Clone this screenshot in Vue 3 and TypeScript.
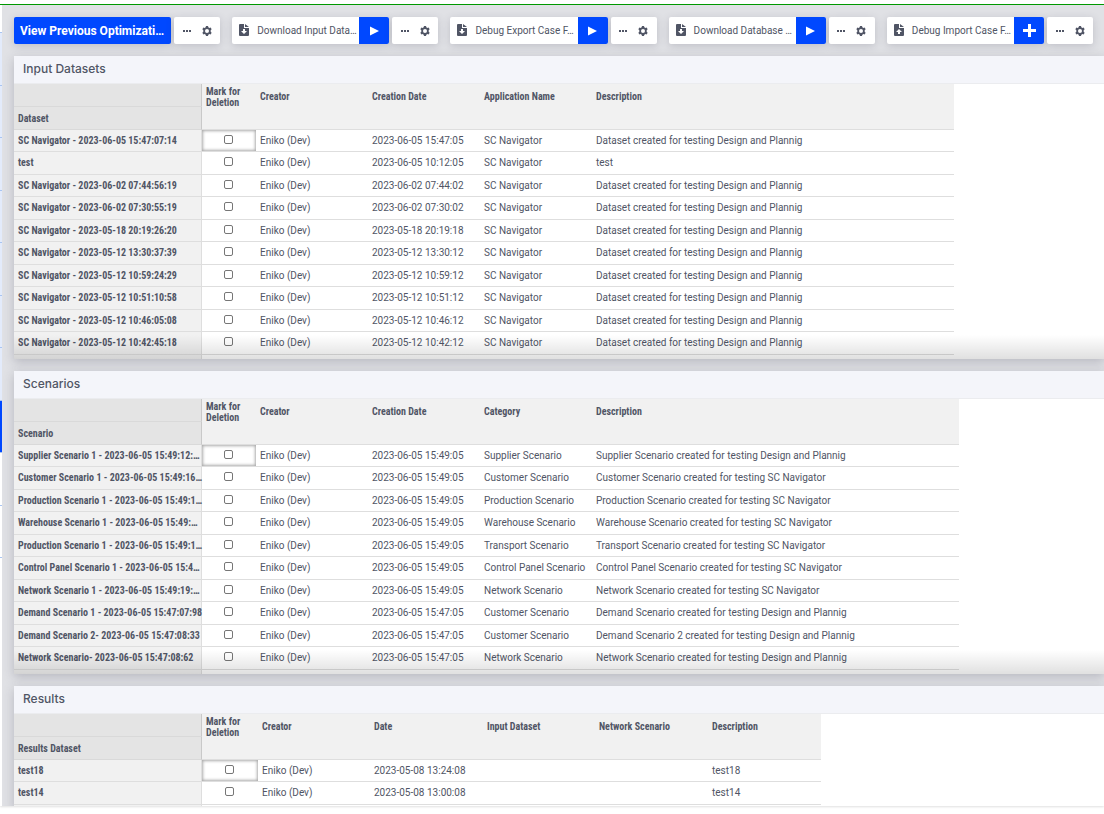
<script setup lang="ts">
interface Row {
  name: string
  cells: string[]
}

interface Grid {
  title: string
  rowLabel: string
  headers: string[]
  widths: number[]
  rows: Row[]
  clipped: boolean
}

interface Action {
  label: string
  icon: 'download' | 'upload'
}

const actions: Action[] = [
  { label: 'Download Input Data…', icon: 'download' },
  { label: 'Debug Export Case F…', icon: 'download' },
  { label: 'Download Database …', icon: 'download' },
  { label: 'Debug Import Case F…', icon: 'upload' },
]

const planning = 'Dataset created for testing Design and Plannig'

function dataset(name: string, created: string, description: string = planning): Row {
  return { name, cells: ['Eniko (Dev)', created, 'SC Navigator', description] }
}

function scenario(name: string, created: string, category: string, description: string): Row {
  return { name, cells: ['Eniko (Dev)', '2023-06-05 ' + created, category, description] }
}

const grids: Grid[] = [
  {
    title: 'Input Datasets',
    rowLabel: 'Dataset',
    headers: ['Creator', 'Creation Date', 'Application Name', 'Description'],
    widths: [188, 54, 112, 112, 112, 362],
    clipped: true,
    rows: [
      dataset('SC Navigator - 2023-06-05 15:47:07:14', '2023-06-05 15:47:05'),
      dataset('test', '2023-06-05 10:12:05', 'test'),
      dataset('SC Navigator - 2023-06-02 07:44:56:19', '2023-06-02 07:44:02'),
      dataset('SC Navigator - 2023-06-02 07:30:55:19', '2023-06-02 07:30:02'),
      dataset('SC Navigator - 2023-05-18 20:19:26:20', '2023-05-18 20:19:18'),
      dataset('SC Navigator - 2023-05-12 13:30:37:39', '2023-05-12 13:30:12'),
      dataset('SC Navigator - 2023-05-12 10:59:24:29', '2023-05-12 10:59:12'),
      dataset('SC Navigator - 2023-05-12 10:51:10:58', '2023-05-12 10:51:12'),
      dataset('SC Navigator - 2023-05-12 10:46:05:08', '2023-05-12 10:46:12'),
      dataset('SC Navigator - 2023-05-12 10:42:45:18', '2023-05-12 10:42:12'),
    ],
  },
  {
    title: 'Scenarios',
    rowLabel: 'Scenario',
    headers: ['Creator', 'Creation Date', 'Category', 'Description'],
    widths: [188, 54, 112, 112, 112, 367],
    clipped: true,
    rows: [
      scenario('Supplier Scenario 1 - 2023-06-05 15:49:12:…', '15:49:05', 'Supplier Scenario', 'Supplier Scenario created for testing Design and Plannig'),
      scenario('Customer Scenario 1 - 2023-06-05 15:49:16…', '15:49:05', 'Customer Scenario', 'Customer Scenario created for testing SC Navigator'),
      scenario('Production Scenario 1 - 2023-06-05 15:49:1…', '15:49:05', 'Production Scenario', 'Production Scenario created for testing SC Navigator'),
      scenario('Warehouse Scenario 1 - 2023-06-05 15:49:…', '15:49:05', 'Warehouse Scenario', 'Warehouse Scenario created for testing SC Navigator'),
      scenario('Production Scenario 1 - 2023-06-05 15:49:1…', '15:49:05', 'Transport Scenario', 'Transport Scenario created for testing SC Navigator'),
      scenario('Control Panel Scenario 1 - 2023-06-05 15:4…', '15:49:05', 'Control Panel Scenario', 'Control Panel Scenario created for testing SC Navigator'),
      scenario('Network Scenario 1 - 2023-06-05 15:49:19:…', '15:49:05', 'Network Scenario', 'Network Scenario created for testing SC Navigator'),
      scenario('Demand Scenario 1 - 2023-06-05 15:47:07:98', '15:47:05', 'Customer Scenario', 'Demand Scenario created for testing Design and Plannig'),
      scenario('Demand Scenario 2- 2023-06-05 15:47:08:33', '15:47:05', 'Customer Scenario', 'Demand Scenario 2 created for testing Design and Plannig'),
      scenario('Network Scenario- 2023-06-05 15:47:08:62', '15:47:05', 'Network Scenario', 'Network Scenario created for testing Design and Plannig'),
    ],
  },
  {
    title: 'Results',
    rowLabel: 'Results Dataset',
    headers: ['Creator', 'Date', 'Input Dataset', 'Network Scenario', 'Description'],
    widths: [188, 56, 112, 113, 112, 113, 113],
    clipped: false,
    rows: [
      { name: 'test18', cells: ['Eniko (Dev)', '2023-05-08 13:24:08', '', '', 'test18'] },
      { name: 'test14', cells: ['Eniko (Dev)', '2023-05-08 13:00:08', '', '', 'test14'] },
    ],
  },
]

const total = (widths: number[]): number => widths.reduce((sum, w) => sum + w, 0)
</script>

<template>
  <div class="app">
    <div class="topline"></div>
    <div class="body">
      <nav class="rail" aria-label="Pages">
        <span v-for="n in 11" :key="n" class="stop" :class="{ first: n === 1, active: n === 9, plain: n > 9 }"></span>
      </nav>
      <main class="page">
        <div class="toolbar">
          <div class="group">
            <button type="button" class="primary">View Previous Optimizati…</button>
            <div class="tools">
              <button type="button" class="tool" aria-label="More">
                <svg width="8" height="2" viewBox="0 0 8 2"><path d="M0 0h2v2H0zM3 0h2v2H3zM6 0h2v2H6z" /></svg>
              </button>
              <button type="button" class="tool" aria-label="Settings">
                <svg width="10" height="10" viewBox="0 0 10 10"><path fill-rule="evenodd" d="M4 0h2l.35 1.35 1 .55 1.3-.4 1 1.75-.95.95v1.6l.95.95-1 1.75-1.3-.4-1 .55L6 10H4l-.35-1.35-1-.55-1.3.4-1-1.75.95-.95V4.2l-.95-.95 1-1.75 1.3.4 1-.55zM5 3a2 2 0 1 0 0 4 2 2 0 0 0 0-4z" /></svg>
              </button>
            </div>
          </div>
          <div v-for="a in actions" :key="a.label" class="group">
            <div class="action">
              <svg class="file" width="10" height="12" viewBox="0 0 10 12">
                <path d="M1 0h4v4h5v7a1 1 0 0 1-1 1H1a1 1 0 0 1-1-1V1a1 1 0 0 1 1-1zM6 0l4 3H6z" />
                <path v-if="a.icon === 'download'" class="mark" d="M4 5h2v2h2L5 10 2 7h2z" />
                <path v-else class="mark" d="M4 10h2V8h2L5 5 2 8h2z" />
              </svg>
              <span class="label">{{ a.label }}</span>
              <button type="button" class="run" :aria-label="a.label">
                <svg v-if="a.icon === 'download'" width="9" height="10" viewBox="0 0 9 10"><path d="M0 .5L9 5 0 9.500z" /></svg>
                <svg v-else width="13" height="13" viewBox="0 0 13 13"><path d="M5 0h3v5h5v3H8v5H5V8H0V5h5z" /></svg>
              </button>
            </div>
            <div class="tools">
              <button type="button" class="tool" aria-label="More">
                <svg width="8" height="2" viewBox="0 0 8 2"><path d="M0 0h2v2H0zM3 0h2v2H3zM6 0h2v2H6z" /></svg>
              </button>
              <button type="button" class="tool" aria-label="Settings">
                <svg width="10" height="10" viewBox="0 0 10 10"><path fill-rule="evenodd" d="M4 0h2l.35 1.35 1 .55 1.3-.4 1 1.75-.95.95v1.6l.95.95-1 1.75-1.3-.4-1 .55L6 10H4l-.35-1.35-1-.55-1.3.4-1-1.75.95-.95V4.2l-.95-.95 1-1.75 1.3.4 1-.55zM5 3a2 2 0 1 0 0 4 2 2 0 0 0 0-4z" /></svg>
              </button>
            </div>
          </div>
        </div>

        <section v-for="g in grids" :key="g.title" class="card" :class="{ clipped: g.clipped }">
          <h2>{{ g.title }}</h2>
          <table :style="{ width: total(g.widths) + 'px' }">
            <colgroup>
              <col v-for="(w, i) in g.widths" :key="i" :style="{ width: w + 'px' }" />
            </colgroup>
            <thead>
              <tr>
                <td class="corner"></td>
                <th scope="col" rowspan="2" class="markhead">Mark for Deletion</th>
                <th v-for="h in g.headers" :key="h" scope="col" rowspan="2">{{ h }}</th>
              </tr>
              <tr>
                <th scope="col" class="corner rowlabel">{{ g.rowLabel }}</th>
              </tr>
            </thead>
            <tbody>
              <tr v-for="(r, i) in g.rows" :key="i">
                <th scope="row">{{ r.name }}</th>
                <td class="check" :class="{ selected: i === 0 }">
                  <input type="checkbox" :aria-label="'Mark for deletion: ' + r.name" />
                </td>
                <td v-for="(c, j) in r.cells" :key="j">{{ c }}</td>
              </tr>
            </tbody>
            <tfoot>
              <tr>
                <td class="stub"></td>
                <td :colspan="g.widths.length - 1"></td>
              </tr>
            </tfoot>
          </table>
        </section>
      </main>
    </div>
  </div>
</template>

<style>
body {
  margin: 0;
  background: #fff;
}
</style>

<style scoped>
.app {
  box-sizing: border-box;
  height: 100vh;
  padding: 4px 0 8px;
  overflow: hidden;
  display: flex;
  flex-direction: column;
  font: 10px/12px Roboto, "Liberation Sans", sans-serif;
  color: #505565;
}
.topline {
  flex: none;
  height: 1px;
  background: #009a00;
}
.body {
  flex: 1;
  min-height: 0;
  display: flex;
  overflow: hidden;
  box-shadow: 0 1px 2px rgba(0, 0, 0, 0.12);
}
.rail {
  width: 2px;
  display: flex;
  flex-direction: column;
  background: #fff;
}
.stop {
  box-sizing: border-box;
  flex: none;
  height: 52px;
  background: #e3ebfb;
  border-bottom: 1px solid #a9c5f2;
}
.stop:nth-child(even) {
  height: 53px;
}
.stop.first {
  height: 28px;
  background: #fff;
}
.stop.active {
  background: #0048ff;
}
.stop.plain {
  background: #fff;
}
.page {
  flex: 1;
  min-width: 0;
  display: flex;
  flex-direction: column;
  gap: 12px;
  padding: 12px 0 0 12px;
  background: #e0e1e5;
  overflow: hidden;
}
.toolbar {
  flex: none;
  display: flex;
  gap: 12px;
  padding-right: 11px;
}
.group {
  flex: 1;
  min-width: 0;
  display: flex;
  gap: 3px;
  height: 27px;
}
button {
  border: 0;
  padding: 0;
  margin: 0;
  font: inherit;
  color: inherit;
  background: none;
  display: flex;
  align-items: center;
  justify-content: center;
}
svg {
  display: block;
  fill: currentColor;
  flex: none;
}
.primary,
.action,
.tools {
  border-radius: 2px;
  box-shadow: 0 2px 8px rgba(60, 60, 80, 0.2);
}
.primary {
  flex: 1;
  justify-content: flex-start;
  padding: 0 6px;
  background: #0048ff;
  color: #fff;
  font-size: 12px;
  font-weight: 700;
  white-space: nowrap;
}
.action {
  flex: 1;
  min-width: 0;
  display: flex;
  align-items: center;
  background: #fff;
}
.file {
  margin: 0 8px 2px 7px;
}
.mark {
  fill: #fff;
}
.label {
  flex: 1;
  white-space: nowrap;
}
.run {
  width: 30px;
  height: 27px;
  background: #0048ff;
  color: #fff;
  border-radius: 0 2px 2px 0;
}
.tools {
  width: 46px;
  display: flex;
  align-items: center;
  justify-content: center;
  gap: 11px;
  background: #fff;
}
.card {
  flex: none;
  position: relative;
  background: #fff;
  box-shadow: 0 3px 10px rgba(60, 60, 80, 0.25);
}
h2 {
  box-sizing: border-box;
  margin: 0;
  height: 28px;
  padding: 0 9px;
  font: 500 12px/26px Inter, "Open Sans", sans-serif;
  background: #f4f5fa;
  border-bottom: 1px solid #ebecef;
}
table {
  table-layout: fixed;
  border-collapse: separate;
  border-spacing: 0;
}
th,
td {
  box-sizing: border-box;
  padding: 0 4px;
  text-align: left;
  white-space: nowrap;
}
th {
  font-family: "Roboto Condensed", Roboto, "Liberation Sans", sans-serif;
  font-size: 10px;
  font-weight: 700;
}
thead th {
  padding-top: 7px;
  line-height: 11px;
  vertical-align: top;
  background: #f1f1f1;
  border-bottom: 1px solid #dedede;
}
thead th.markhead {
  padding-top: 2px;
  white-space: normal;
}
thead .corner {
  height: 23px;
  padding: 0 4px;
  vertical-align: middle;
  background: #e4e4e4;
  border-right: 1px solid #c9c9c9;
  border-bottom: 1px solid #d9d9d9;
}
tbody th,
tbody td {
  height: 22px;
  border-bottom: 1px solid #dedede;
}
tbody tr:nth-child(even) th,
tbody tr:nth-child(even) td {
  height: 23px;
}
tbody th,
.stub {
  background: #f1f1f1;
  border-right: 1px solid #dedede;
}
tbody th {
  padding-right: 0;
}
tbody td.check {
  padding: 0 2px 0 0;
  vertical-align: top;
}
.selected {
  box-shadow: inset 0 0 3px 1px #aaa;
}
input {
  appearance: none;
  box-sizing: border-box;
  display: block;
  width: 9px;
  height: 9px;
  margin: 5px auto 0;
  border: 1px solid #767676;
  border-radius: 2px;
  background: #fff;
}
tfoot td {
  height: 4px;
  padding: 0;
}
.clipped::after {
  content: "";
  position: absolute;
  left: 0;
  right: 0;
  bottom: 0;
  height: 24px;
  pointer-events: none;
  background: linear-gradient(rgba(0, 0, 0, 0), rgba(0, 0, 0, 0.12));
}
</style>
